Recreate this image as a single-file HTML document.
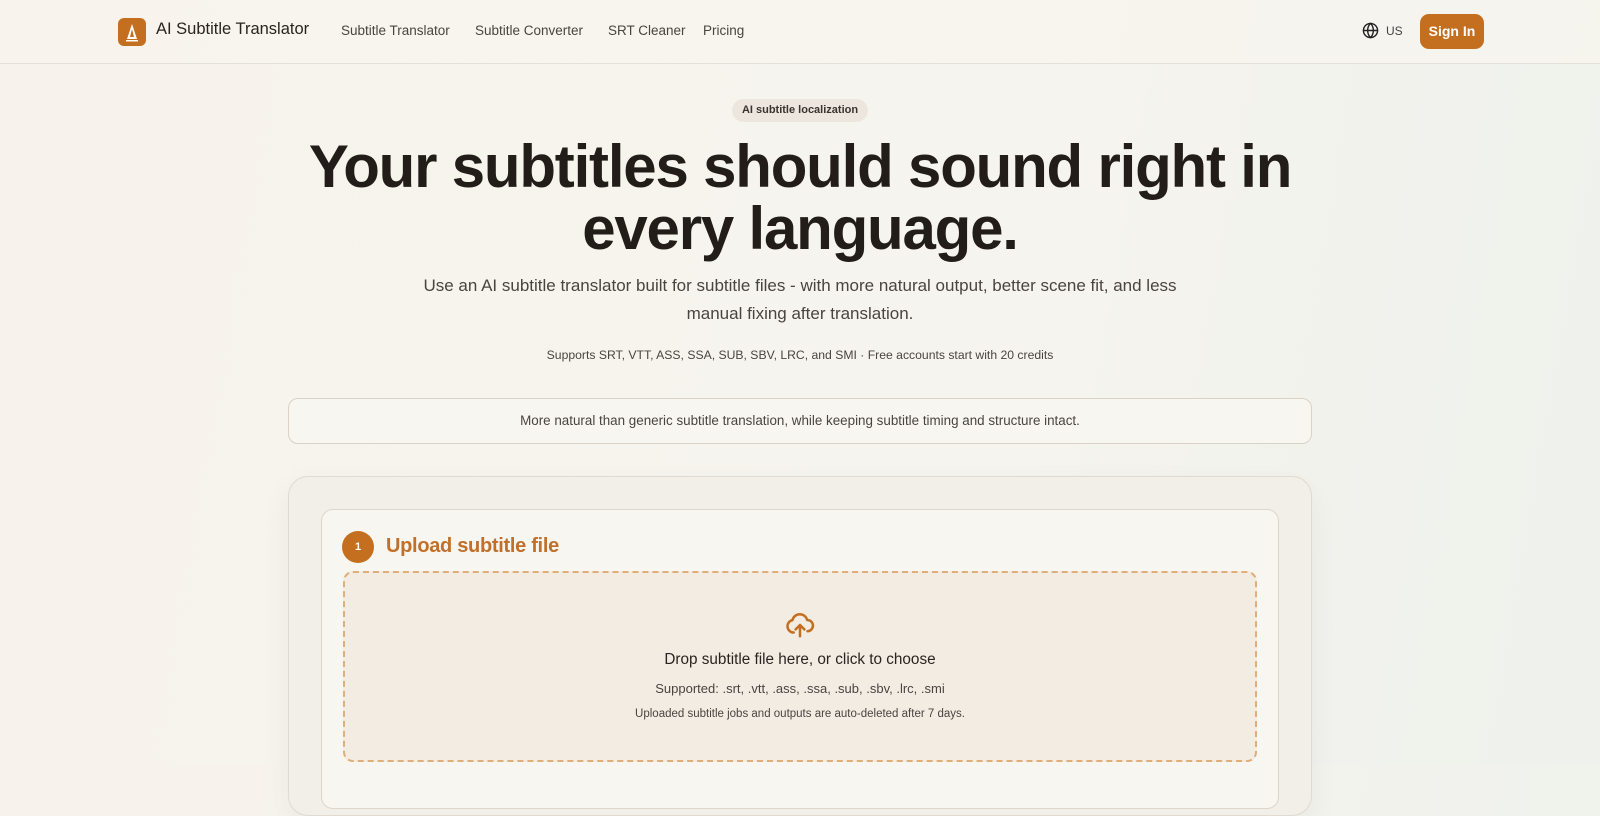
<!DOCTYPE html>
<html><head><meta charset="utf-8">
<style>
*{box-sizing:border-box;margin:0;padding:0}
body{width:1600px;height:765px;overflow:hidden;font-family:"Liberation Sans",sans-serif;background:linear-gradient(100deg,#f7f3ec 0%,#f6f4ee 60%,#eef1ec 100%);color:#2a2420;position:relative}
.hdr{height:64px;border-bottom:1px solid #e4e0d8;position:relative;background:rgba(248,245,239,.6)}
.logo{position:absolute;left:118px;top:18px;width:28px;height:28px;border-radius:6px;background:#c46f1f}
.brand{position:absolute;left:156px;top:20px;font-size:16.5px;color:#2a2420}
.nav{position:absolute;top:23px;font-size:13.5px;color:#4a4440}
.glob{position:absolute;left:1362px;top:22px}
.us{position:absolute;left:1386px;top:24px;font-size:12px;color:#444}
.btn{position:absolute;left:1420px;top:14px;width:64px;height:35px;border-radius:9px;background:#c46f1f;color:#fff;font-weight:bold;font-size:14px;text-align:center;line-height:35px}
.pill{position:absolute;left:732px;top:99px;width:136px;height:23px;border-radius:12px;background:#ece6df;font-size:11px;font-weight:bold;color:#3a332e;text-align:center;line-height:23px}
h1{position:absolute;left:0;width:1600px;top:136px;text-align:center;font-size:60px;line-height:62px;font-weight:bold;letter-spacing:-1.2px;color:#231d19}
.sub{position:absolute;left:0;width:1600px;top:272px;text-align:center;font-size:17px;line-height:28px;color:#4a4440}
.sup{position:absolute;left:0;width:1600px;top:348px;text-align:center;font-size:12.2px;color:#4a4440}
.bar{position:absolute;left:288px;top:398px;width:1024px;height:46px;border:1px solid #d8d2c8;border-radius:10px;font-size:13.4px;color:#4a4440;text-align:center;line-height:44px;background:#f8f6f0}
.outer{position:absolute;left:288px;top:476px;width:1024px;height:340px;border:1px solid #e0dad0;border-radius:20px;background:#f2efe9;box-shadow:0 10px 30px rgba(0,0,0,.05)}
.inner{position:absolute;left:321px;top:509px;width:958px;height:300px;border:1px solid #ddd6cb;border-radius:12px;background:#f8f6f0}
.num{position:absolute;left:342px;top:531px;width:32px;height:32px;border-radius:50%;background:#c46f1f;color:#fff;font-size:11px;font-weight:bold;text-align:center;line-height:32px}
.st{position:absolute;left:386px;top:535px;font-size:20px;font-weight:bold;color:#c0702a;letter-spacing:-.3px}
.drop{position:absolute;left:343px;top:571px;width:914px;height:191px;border:2px dashed #e0ae78;border-radius:10px;background:#f2ece2}
.t1{position:absolute;left:0;width:1600px;top:651px;text-align:center;font-size:15.3px;color:#2a2420}
.t2{position:absolute;left:0;width:1600px;top:681px;text-align:center;font-size:13px;color:#4a4440}
.t3{position:absolute;left:0;width:1600px;top:708px;text-align:center;font-size:11.5px;color:#4a4440}
</style></head><body>
<div class="hdr">
<div class="logo"><svg width="28" height="28" viewBox="0 0 28 28"><path d="M14 6 L9 21 L19 21 Z" fill="#fff"/><path d="M14 11 L12 19 L16 19Z" fill="#c46f1f"/><rect x="8" y="22" width="12" height="1.5" fill="#fff"/></svg></div>
<div class="brand">AI Subtitle Translator</div>
<div class="nav" style="left:341px">Subtitle Translator</div>
<div class="nav" style="left:475px">Subtitle Converter</div>
<div class="nav" style="left:608px">SRT Cleaner</div>
<div class="nav" style="left:703px">Pricing</div>
<svg class="glob" width="17" height="17" viewBox="0 0 24 24" fill="none" stroke="#222" stroke-width="2"><circle cx="12" cy="12" r="10"/><path d="M2 12h20M12 2c3 3 4 6.5 4 10s-1 7-4 10c-3-3-4-6.5-4-10s1-7 4-10z"/></svg>
<div class="us">US</div>
<div class="btn">Sign In</div>
</div>
<div class="pill">AI subtitle localization</div>
<h1>Your subtitles should sound right in<br>every language.</h1>
<div class="sub">Use an AI subtitle translator built for subtitle files - with more natural output, better scene fit, and less<br>manual fixing after translation.</div>
<div class="sup">Supports SRT, VTT, ASS, SSA, SUB, SBV, LRC, and SMI · Free accounts start with 20 credits</div>
<div class="bar">More natural than generic subtitle translation, while keeping subtitle timing and structure intact.</div>
<div class="outer"></div>
<div class="inner"></div>
<div class="num">1</div>
<div class="st">Upload subtitle file</div>
<div class="drop"></div>
<svg style="position:absolute;left:784px;top:610px" width="32" height="30" viewBox="0 0 24 24" fill="none" stroke="#c46f1f" stroke-width="2" stroke-linecap="round" stroke-linejoin="round"><path d="M7 18a5 5 0 0 1-1-9.9A6 6 0 0 1 17.7 8 4.5 4.5 0 0 1 18 17"/><path d="M12 21v-9M8.5 15.5 12 12l3.5 3.5"/></svg>
<div class="t1">Drop subtitle file here, or click to choose</div>
<div class="t2">Supported: .srt, .vtt, .ass, .ssa, .sub, .sbv, .lrc, .smi</div>
<div class="t3">Uploaded subtitle jobs and outputs are auto-deleted after 7 days.</div>
</body></html>
